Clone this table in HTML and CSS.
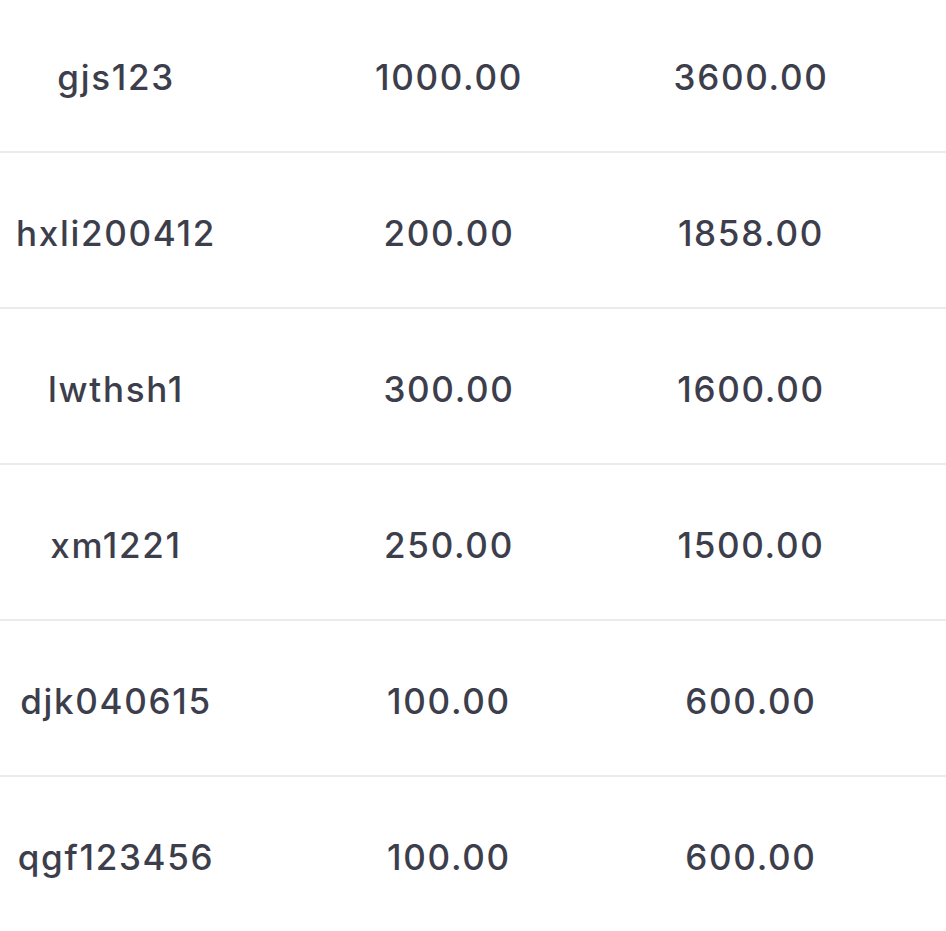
FILE: index.html
```html
<!DOCTYPE html>
<html lang="en">
<head>
<meta charset="utf-8">
<title>Table</title>
<link rel="stylesheet" href="styles.css">
</head>
<body>
<div class="table">
  <div class="row"><span class="cell c1">gjs123</span><span class="cell c2">1000.00</span><span class="cell c3">3600.00</span></div>
  <div class="row"><span class="cell c1">hxli200412</span><span class="cell c2">200.00</span><span class="cell c3">1858.00</span></div>
  <div class="row"><span class="cell c1">lwthsh1</span><span class="cell c2">300.00</span><span class="cell c3">1600.00</span></div>
  <div class="row"><span class="cell c1">xm1221</span><span class="cell c2">250.00</span><span class="cell c3">1500.00</span></div>
  <div class="row"><span class="cell c1">djk040615</span><span class="cell c2">100.00</span><span class="cell c3">600.00</span></div>
  <div class="row"><span class="cell c1">qgf123456</span><span class="cell c2">100.00</span><span class="cell c3">600.00</span></div>
</div>
</body>
</html>
```

FILE: styles.css
```css
html, body {
  margin: 0;
  padding: 0;
  background: #ffffff;
}
body {
  overflow: hidden;
  font-family: Inter, "Noto Sans", sans-serif;
  color: #3d3e4c;
}
.table {
  margin-top: -3px;
}
.row {
  display: grid;
  grid-template-columns: 232px 434px 170px 1fr;
  align-items: center;
  height: 148px;
  border-bottom: 2px solid #ebebee;
  padding-top: 6px;
  box-sizing: content-box;
}
.row:last-child {
  border-bottom: none;
}
.cell {
  text-align: center;
  font-size: 35px;
  font-weight: 500;
  letter-spacing: 1.7px;
  line-height: 1;
  white-space: nowrap;
}
```
